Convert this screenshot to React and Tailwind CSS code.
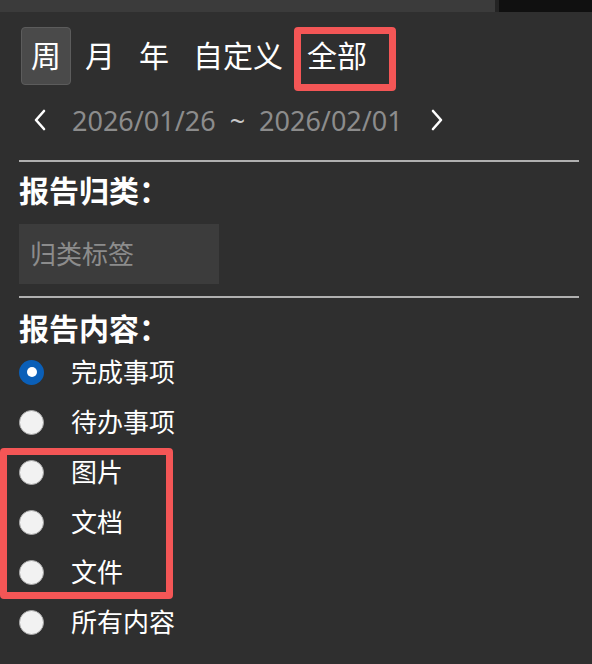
import { useState } from 'react';

const FONT = { fontFamily: '"Noto Sans", "Noto Sans CJK SC", sans-serif' };

const TABS = ['周', '月', '年', '自定义'];

const OPTIONS = [
  { id: 'done', label: '完成事项' },
  { id: 'todo', label: '待办事项' },
  { id: 'image', label: '图片', marked: true },
  { id: 'doc', label: '文档', marked: true },
  { id: 'file', label: '文件', marked: true },
  { id: 'all', label: '所有内容' },
];

function Chevron({ dir }) {
  return (
    <svg width="14" height="22" viewBox="0 0 14 22" fill="none" className="block">
      <path
        d={dir === 'left' ? 'M11 2 L3 11 L11 20' : 'M3 2 L11 11 L3 20'}
        stroke="#ffffff"
        strokeWidth="2.6"
        strokeLinecap="round"
        strokeLinejoin="round"
      />
    </svg>
  );
}

function Radio({ checked }) {
  if (checked) {
    return (
      <span className="w-[25px] h-[25px] rounded-full bg-[#0a5fb8] flex items-center justify-center flex-shrink-0">
        <span className="w-[10px] h-[10px] rounded-full bg-white" />
      </span>
    );
  }
  return (
    <span className="w-[25px] h-[25px] rounded-full bg-[#f2f2f2] border border-[#a8a8a8] flex-shrink-0" />
  );
}

function OptionRow({ option, checked, onSelect }) {
  return (
    <button
      onClick={() => onSelect(option.id)}
      className="h-[50px] flex items-center text-left"
    >
      <Radio checked={checked} />
      <span className="ml-[27px] text-[26px] leading-none text-white">{option.label}</span>
    </button>
  );
}

function TabButton({ label, active, onClick }) {
  return (
    <button
      onClick={onClick}
      className={[
        'h-[58px] px-[9px] rounded-[4px] text-[30px] leading-none text-white border',
        active ? 'bg-[#4a4a4a] border-[#5c5c5c]' : 'border-transparent',
      ].join(' ')}
    >
      {label}
    </button>
  );
}

export default function App() {
  const [tab, setTab] = useState('周');
  const [content, setContent] = useState('done');

  const before = OPTIONS.slice(0, 2);
  const marked = OPTIONS.filter((o) => o.marked);
  const after = OPTIONS.slice(5);

  return (
    <div className="w-[592px] h-[664px] overflow-hidden bg-[#101010]" style={FONT}>
      {/* ── Window strip above the panel ───────────────────────────── */}
      <div className="flex h-[12px]">
        <div className="w-[495px] bg-[#3b3b3b]" />
        <div className="w-[4px] bg-[#242424]" />
        <div className="flex-1 bg-[#101010]" />
      </div>

      {/* ── Panel ──────────────────────────────────────────────────── */}
      <div className="-mt-[8px] h-[660px] rounded-t-[8px] bg-[#2f2f2f] pl-[19px] pr-[13px] pt-[23px]">

        {/* Range tabs */}
        <div className="ml-[2px] flex items-start gap-[4px] h-[64px]">
          {TABS.map((t) => (
            <TabButton key={t} label={t} active={tab === t} onClick={() => setTab(t)} />
          ))}
          <div className="relative">
            <TabButton label="全部" active={tab === '全部'} onClick={() => setTab('全部')} />
            <span className="pointer-events-none absolute left-[-3px] top-0 w-[102px] h-[64px] border-[7px] border-[#f45656] rounded-[4px]" />
          </div>
        </div>

        {/* Date range */}
        <div className="mt-[9px] h-[40px] flex items-center">
          <span className="ml-[14px]"><Chevron dir="left" /></span>
          <span className="ml-[25px] text-[27px] leading-none text-[#8c8c8c]">2026/01/26</span>
          <span className="ml-[14px] text-[27px] leading-none text-[#c8c8c8]">~</span>
          <span className="ml-[14px] text-[27px] leading-none text-[#8c8c8c]">2026/02/01</span>
          <span className="ml-[27px]"><Chevron dir="right" /></span>
        </div>

        <div className="mt-[20px] h-[2px] bg-[#b0b0b0]" />

        {/* Category */}
        <p className="mt-[9px] text-[30px] leading-[40px] font-bold text-white">报告归类：</p>
        <input
          placeholder="归类标签"
          className="mt-[13px] block w-[200px] h-[60px] bg-[#3c3c3c] px-[11px] text-[26px] text-white placeholder:text-[#8c8c8c] outline-none"
          style={FONT}
        />

        <div className="mt-[12px] h-[2px] bg-[#b0b0b0]" />

        {/* Content */}
        <p className="mt-[13px] text-[30px] leading-[36px] font-bold text-white">报告内容：</p>
        <div className="flex flex-col">
          {before.map((o) => (
            <OptionRow key={o.id} option={o} checked={content === o.id} onSelect={setContent} />
          ))}
          <div className="relative flex flex-col">
            {marked.map((o) => (
              <OptionRow key={o.id} option={o} checked={content === o.id} onSelect={setContent} />
            ))}
            <span className="pointer-events-none absolute left-[-19px] top-[1px] w-[173px] h-[151px] border-[7px] border-[#f45656] rounded-[4px]" />
          </div>
          {after.map((o) => (
            <OptionRow key={o.id} option={o} checked={content === o.id} onSelect={setContent} />
          ))}
        </div>
      </div>
    </div>
  );
}
